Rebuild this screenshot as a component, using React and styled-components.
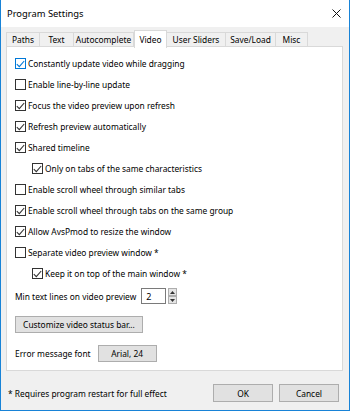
import React from 'react';
import styled, { createGlobalStyle } from 'styled-components';

const GlobalStyle = createGlobalStyle`
  html, body {
    margin: 0;
    padding: 0;
    background: #ffffff;
  }
  body {
    font-family: "Noto Sans", "DejaVu Sans", sans-serif;
    font-size: 8.4px;
    color: #000;
  }
`;

const Window = styled.div`
  width: 350px;
  height: 411px;
  box-sizing: border-box;
  border: 1px solid #1883d7;
  border-top: none;
  background: #f0f0f0;
  display: flex;
  flex-direction: column;
  overflow: hidden;
`;

const TitleBar = styled.div`
  height: 26px;
  background: #ffffff;
  display: flex;
  align-items: center;
  justify-content: space-between;
  padding: 0 7px 1px 6px;
  font-size: 9.4px;
`;

const Close = styled.svg`
  width: 9px;
  height: 9px;
  margin-right: 1px;
`;

const Body = styled.div`
  flex: 1;
  display: flex;
  flex-direction: column;
  padding: 3px 6px 0 5px;
`;

const TabRow = styled.div`
  display: flex;
  align-items: flex-end;
  height: 17px;
  position: relative;
  z-index: 1;
`;

const Tab = styled.div`
  box-sizing: border-box;
  width: ${(p) => p.$w}px;
  height: ${(p) => (p.$active ? '18px' : '15px')};
  margin-bottom: ${(p) => (p.$active ? '-1px' : '0')};
  background: ${(p) => (p.$active ? '#ffffff' : '#f0f0f0')};
  border: 1px solid #d9d9d9;
  border-bottom: ${(p) => (p.$active ? 'none' : '1px solid #d9d9d9')};
  border-left: ${(p) => (p.$first || p.$active ? '1px solid #d9d9d9' : 'none')};
  display: flex;
  align-items: center;
  justify-content: center;
  white-space: nowrap;
  position: relative;
  z-index: ${(p) => (p.$active ? 2 : 1)};
`;

const Panel = styled.div`
  box-sizing: border-box;
  height: 325px;
  margin-top: -1px;
  background: #ffffff;
  border: 1px solid #d9d9d9;
  padding: 6px 8px 0 8px;
  display: flex;
  flex-direction: column;
`;

const Row = styled.label`
  height: 21px;
  display: flex;
  align-items: center;
  gap: 2px;
  padding-left: ${(p) => (p.$indent ? '17px' : '0')};
  white-space: nowrap;
`;

const Box = styled.span`
  width: 11px;
  height: 11px;
  box-sizing: border-box;
  border: 1px solid ${(p) => (p.$focus ? '#0078d7' : '#333333')};
  background: #ffffff;
  display: inline-flex;
  align-items: center;
  justify-content: center;
  flex-shrink: 0;
`;

const SpinRow = styled.div`
  height: 20px;
  margin-top: 2px;
  display: flex;
  align-items: center;
`;

const SpinLabel = styled.span`
  margin-right: 5px;
`;

const Edit = styled.div`
  box-sizing: border-box;
  width: 25px;
  height: 16px;
  border: 1px solid #7a7a7a;
  background: #ffffff;
  padding-left: 4px;
  display: flex;
  align-items: center;
  font-size: 9px;
`;

const Spinner = styled.div`
  display: flex;
  flex-direction: column;
  margin-left: 2px;
`;

const SpinBtn = styled.div`
  box-sizing: border-box;
  width: 9px;
  height: 8px;
  border: 1px solid #adadad;
  background: #e5e5e5;
  display: flex;
  align-items: center;
  justify-content: center;
`;

const Button = styled.div`
  box-sizing: border-box;
  height: ${(p) => p.$h || 17}px;
  width: ${(p) => p.$w}px;
  background: #e1e1e1;
  border: 1px solid #adadad;
  display: inline-flex;
  align-items: center;
  justify-content: center;
  white-space: nowrap;
`;

const ButtonRow = styled.div`
  margin-top: 10px;
  display: flex;
`;

const FontRow = styled.div`
  margin-top: 12px;
  display: flex;
  align-items: center;
  gap: 7px;
`;

const Footer = styled.div`
  flex: 1;
  display: flex;
  align-items: center;
  justify-content: space-between;
  padding: 5px 4px 0 2px;
`;

const Note = styled.span``;

const Actions = styled.div`
  display: flex;
  gap: 6px;
`;

const Check = ({ color }) => (
  <svg width="9" height="8" viewBox="0 0 9 8">
    <path d="M0.8 4.2 L3.3 6.6 L8.2 1" fill="none" stroke={color} strokeWidth="1.1" />
  </svg>
);

const Option = ({ checked, indent, focus, children }) => (
  <Row $indent={indent}>
    <Box $focus={focus}>{checked && <Check color={focus ? '#0078d7' : '#333333'} />}</Box>
    {children}
  </Row>
);

const Arrow = ({ up }) => (
  <svg width="5" height="3" viewBox="0 0 5 3">
    <path d={up ? 'M0 3 L2.5 0 L5 3 Z' : 'M0 0 L2.5 3 L5 0 Z'} fill="#333" />
  </svg>
);

const tabs = [
  { label: 'Paths', w: 34 },
  { label: 'Text', w: 34 },
  { label: 'Autocomplete', w: 60 },
  { label: 'Video', w: 33 },
  { label: 'User Sliders', w: 59 },
  { label: 'Save/Load', w: 50 },
  { label: 'Misc', w: 32 },
];

const options = [
  { text: 'Constantly update video while dragging', checked: true, focus: true },
  { text: 'Enable line-by-line update', checked: false },
  { text: 'Focus the video preview upon refresh', checked: true },
  { text: 'Refresh preview automatically', checked: true },
  { text: 'Shared timeline', checked: true },
  { text: 'Only on tabs of the same characteristics', checked: true, indent: true },
  { text: 'Enable scroll wheel through similar tabs', checked: false },
  { text: 'Enable scroll wheel through tabs on the same group', checked: true },
  { text: 'Allow AvsPmod to resize the window', checked: true },
  { text: 'Separate video preview window *', checked: false },
  { text: 'Keep it on top of the main window *', checked: true, indent: true },
];

export default function App() {
  return (
    <>
      <GlobalStyle />
      <Window>
        <TitleBar>
          <span>Program Settings</span>
          <Close viewBox="0 0 9 9">
            <path d="M0.5 0.5 L8.5 8.5 M8.5 0.5 L0.5 8.5" stroke="#111" strokeWidth="1" />
          </Close>
        </TitleBar>
        <Body>
          <TabRow>
            {tabs.map((t, i) => (
              <Tab key={t.label} $w={t.w} $first={i === 0} $active={t.label === 'Video'}>
                {t.label}
              </Tab>
            ))}
          </TabRow>
          <Panel>
            {options.map((o) => (
              <Option key={o.text} checked={o.checked} indent={o.indent} focus={o.focus}>
                {o.text}
              </Option>
            ))}
            <SpinRow>
              <SpinLabel>Min text lines on video preview</SpinLabel>
              <Edit>2</Edit>
              <Spinner>
                <SpinBtn>
                  <Arrow up />
                </SpinBtn>
                <SpinBtn>
                  <Arrow />
                </SpinBtn>
              </Spinner>
            </SpinRow>
            <ButtonRow>
              <Button $w={128}>Customize video status bar...</Button>
            </ButtonRow>
            <FontRow>
              <span>Error message font</span>
              <Button $w={59}>Arial, 24</Button>
            </FontRow>
          </Panel>
          <Footer>
            <Note>* Requires program restart for full effect</Note>
            <Actions>
              <Button $w={60} $h={18}>OK</Button>
              <Button $w={60} $h={18}>Cancel</Button>
            </Actions>
          </Footer>
        </Body>
      </Window>
    </>
  );
}
